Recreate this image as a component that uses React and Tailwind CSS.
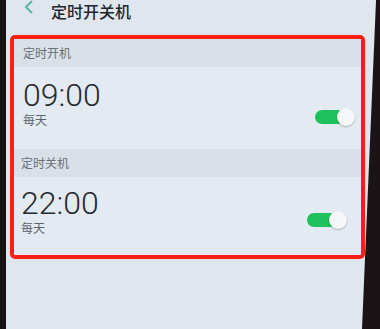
import React from "react";

const cjk = { fontFamily: '"Noto Sans CJK SC", "Noto Sans", sans-serif' };

const Toggle = ({ className }) => (
  <div className={`relative h-[18px] w-[40px] ${className}`}>
    <div className="absolute left-0 top-[2px] h-[14px] w-[30px] rounded-full bg-[#1ec15c]" />
    <div className="absolute right-0 top-0 h-[18px] w-[18px] rounded-full bg-[#f4f6f8] shadow-[0_1px_2px_rgba(0,0,0,0.25)]" />
  </div>
);

const Section = ({ label, time, toggleClass, pad, rowTop }) => (
  <>
    <div className={`flex h-[28px] items-center bg-[#d9e0e7] ${pad}`}>
      <span className="text-[12px] leading-[14px] text-[#6a7079]" style={cjk}>
        {label}
      </span>
    </div>
    <div className={`flex justify-between ${pad} ${rowTop}`}>
      <div className="flex flex-col">
        <span
          className="text-[32px] font-light leading-[34px] text-[#262b31]"
          style={{ fontFamily: "Roboto, sans-serif" }}
        >
          {time}
        </span>
        <span className="text-[12px] leading-[16px] text-[#5d636b]" style={cjk}>
          每天
        </span>
      </div>
      <Toggle className={toggleClass} />
    </div>
  </>
);

export default function App() {
  return (
    <div className="relative flex h-[329px] w-[380px] overflow-hidden bg-[#dfe6ee]">
      <div className="w-[6px] shrink-0 bg-[#161214]" />
      <div className="flex flex-1 flex-col">
        <div className="flex h-[35px] items-start gap-[17px] pl-[18px]">
          <svg width="10" height="14" viewBox="0 0 10 14">
            <path d="M8 1 L2 7 L8 13" fill="none" stroke="#4fb5a2" strokeWidth="1.8" />
          </svg>
          <span className="text-[16px] font-medium leading-[22px] text-[#23272d]" style={cjk}>
            定时开关机
          </span>
        </div>
        <div className="ml-[4px] mr-[15px] h-[224px] rounded-[5px] border-4 border-[#ff1d16] bg-[#e3eaf1]">
          <div className="flex flex-col">
            <Section
              label="定时开机"
              time="09:00"
              pad="pl-[9px] pr-[6px]"
              rowTop="pt-[11px]"
              toggleClass="mt-[30px]"
            />
            <div className="h-[21px]" />
            <Section
              label="定时关机"
              time="22:00"
              pad="pl-[7px] pr-[6px]"
              rowTop="pt-[9px]"
              toggleClass="mt-[25px] mr-[8px]"
            />
          </div>
        </div>
      </div>
      <div className="absolute inset-y-0 right-0 w-[18px] bg-[#1b1416] [clip-path:polygon(100%_0,78%_0,0_100%,100%_100%)]" />
    </div>
  );
}
